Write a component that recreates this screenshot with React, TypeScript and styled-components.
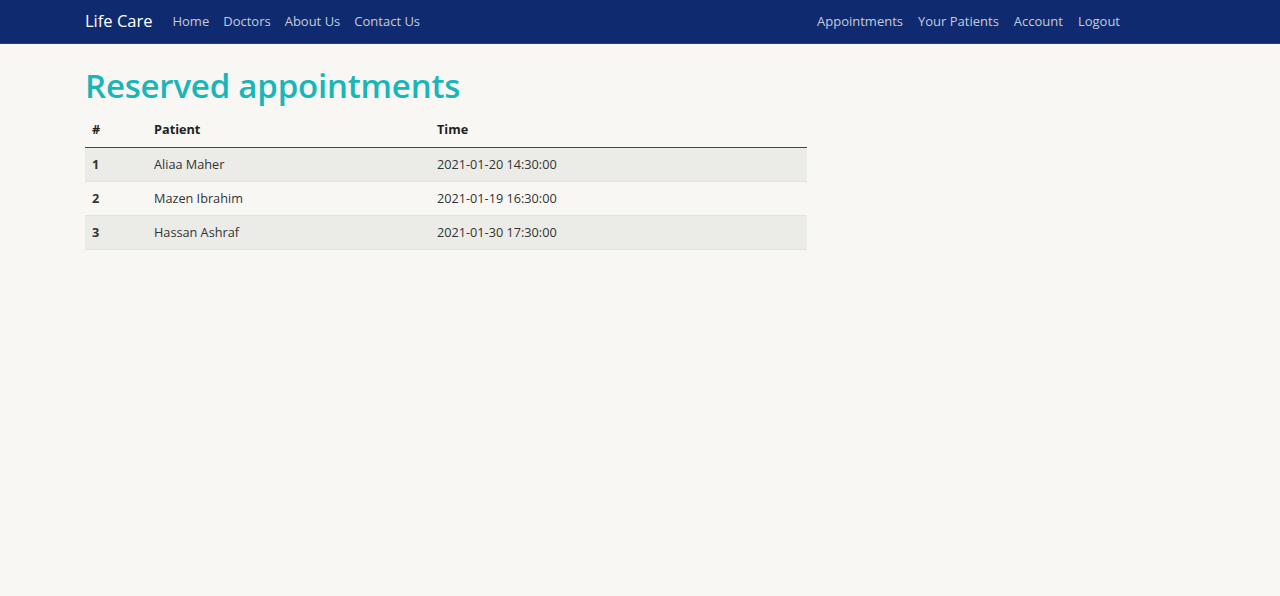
import React from "react";
import styled, { createGlobalStyle } from "styled-components";

const Global = createGlobalStyle`
  html, body { margin: 0; padding: 0; }
  body {
    background: #f8f7f4;
    font-family: "Open Sans", "Noto Sans", sans-serif;
    color: #222;
  }
`;

const Navbar = styled.nav`
  height: 44px;
  background: #102a6f;
  border-bottom: 1px solid #2b3f75;
  display: flex;
  align-items: center;
  padding: 0 0 2px 85px;
  box-sizing: border-box;
`;

const Brand = styled.a`
  font-size: 16.5px;
  color: #ffffff;
  margin-right: 14px;
  text-decoration: none;
`;

const NavGroup = styled.div<{ $right?: boolean }>`
  display: flex;
  gap: ${(p) => (p.$right ? "15px" : "14px")};
  margin-left: ${(p) => (p.$right ? "auto" : "6px")};
  margin-right: ${(p) => (p.$right ? "160px" : "0")};
`;

const NavLink = styled.a`
  font-size: 13px;
  color: #c5cbdc;
  text-decoration: none;
`;

const Main = styled.main`
  padding: 0 0 0 85px;
`;

const Title = styled.h1`
  margin: 21px 0 0;
  font-size: 33px;
  font-weight: 600;
  color: #19b6b9;
  line-height: 42px;
  letter-spacing: -0.2px;
`;

const Table = styled.table`
  width: 722px;
  margin-top: 5px;
  border-collapse: collapse;
  font-size: 12.7px;
`;

const Th = styled.th`
  text-align: left;
  font-weight: 700;
  padding: 8px 7px 9px;
  border-bottom: 1.5px solid #444;
  color: #222;
`;

const Row = styled.tr<{ $striped: boolean }>`
  background: ${(p) => (p.$striped ? "#ebebe7" : "transparent")};
  border-bottom: 1px solid #e2e2de;
`;

const Td = styled.td<{ $bold?: boolean }>`
  padding: 7px 7px 8px;
  height: 18px;
  font-weight: ${(p) => (p.$bold ? 700 : 400)};
  color: #333;
`;

const rows = [
  { id: 1, patient: "Aliaa Maher", time: "2021-01-20 14:30:00" },
  { id: 2, patient: "Mazen Ibrahim", time: "2021-01-19 16:30:00" },
  { id: 3, patient: "Hassan Ashraf", time: "2021-01-30 17:30:00" },
];

export default function App() {
  return (
    <>
      <Global />
      <Navbar>
        <Brand>Life Care</Brand>
        <NavGroup>
          <NavLink>Home</NavLink>
          <NavLink>Doctors</NavLink>
          <NavLink>About Us</NavLink>
          <NavLink>Contact Us</NavLink>
        </NavGroup>
        <NavGroup $right>
          <NavLink>Appointments</NavLink>
          <NavLink>Your Patients</NavLink>
          <NavLink>Account</NavLink>
          <NavLink>Logout</NavLink>
        </NavGroup>
      </Navbar>
      <Main>
        <Title>Reserved appointments</Title>
        <Table>
          <colgroup>
            <col style={{ width: 62 }} />
            <col style={{ width: 283 }} />
            <col />
          </colgroup>
          <thead>
            <tr>
              <Th>#</Th>
              <Th>Patient</Th>
              <Th>Time</Th>
            </tr>
          </thead>
          <tbody>
            {rows.map((r, i) => (
              <Row key={r.id} $striped={i % 2 === 0}>
                <Td $bold>{r.id}</Td>
                <Td>{r.patient}</Td>
                <Td>{r.time}</Td>
              </Row>
            ))}
          </tbody>
        </Table>
      </Main>
    </>
  );
}
